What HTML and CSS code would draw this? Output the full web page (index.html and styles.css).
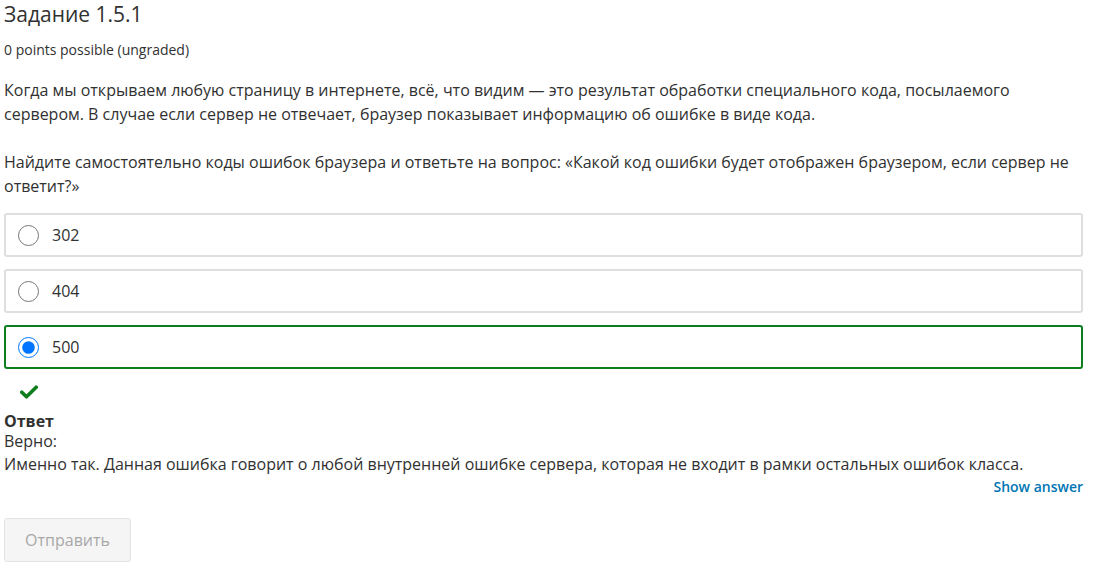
FILE: index.html
```html
<!DOCTYPE html>
<html lang="ru">
<head>
<meta charset="utf-8">
<link rel="stylesheet" href="styles.css">
</head>
<body>
<div class="problem">
  <h3 class="title">Задание 1.5.1</h3>
  <div class="points">0 points possible (ungraded)</div>
  <p class="text">Когда мы открываем любую страницу в интернете, всё, что видим — это результат обработки специального кода, посылаемого сервером. В случае если сервер не отвечает, браузер показывает информацию об ошибке в виде кода.</p>
  <p class="text">Найдите самостоятельно коды ошибок браузера и ответьте на вопрос: «Какой код ошибки будет отображен браузером, если сервер не ответит?»</p>
  <div class="choices">
    <label class="choice"><input type="radio" name="q"><span>302</span></label>
    <label class="choice"><input type="radio" name="q"><span>404</span></label>
    <label class="choice correct"><input type="radio" name="q" checked><span>500</span></label>
  </div>
  <div class="status">
    <svg width="18" height="14" viewBox="0 0 18 14"><path d="M1.8 7.2 L6.5 11.8 L16.2 2.2" fill="none" stroke="#0d7d1e" stroke-width="3.6" stroke-linecap="round" stroke-linejoin="round"/></svg>
  </div>
  <div class="feedback">
    <div class="fb-title">Ответ</div>
    <div>Верно:</div>
    <div>Именно так. Данная ошибка говорит о любой внутренней ошибке сервера, которая не входит в рамки остальных ошибок класса.</div>
  </div>
  <div class="show-row"><a class="show" href="#">Show answer</a></div>
  <button class="submit" disabled>Отправить</button>
</div>
</body>
</html>
```
FILE: styles.css
```css
html, body {
  margin: 0;
  padding: 0;
  background: #fff;
}
body {
  font-family: "Open Sans", "Noto Sans", sans-serif;
  color: #313131;
}
.problem {
  width: 1079px;
  padding-left: 4px;
}
.title {
  margin: 0;
  font-size: 21px;
  font-weight: 400;
  line-height: 28px;
  color: #313131;
}
.points {
  margin-top: 12px;
  font-size: 14px;
  line-height: 20px;
  color: #313131;
}
.text {
  margin: 18px 0 0;
  font-size: 16px;
  line-height: 24px;
}
.text + .text {
  margin-top: 24px;
}
.choices {
  margin-top: 15px;
  display: flex;
  flex-direction: column;
  gap: 12px;
}
.choice {
  display: flex;
  align-items: center;
  height: 44px;
  box-sizing: border-box;
  border: 2px solid #dedede;
  border-radius: 3px;
  padding-left: 12px;
  font-size: 16px;
}
.choice.correct {
  border-color: #0d7d1e;
}
.choice input {
  width: 21px;
  height: 21px;
  margin: 0 13px 0 0;
  accent-color: #0075ff;
}
.status {
  margin-top: 16px;
  padding-left: 16px;
  height: 16px;
  display: flex;
}
.feedback {
  margin-top: 11px;
  font-size: 16px;
  line-height: 23px;
}
.fb-title {
  font-weight: 700;
  line-height: 18px;
}
.show-row {
  display: flex;
  justify-content: flex-end;
}
.show {
  font-size: 14px;
  line-height: 22px;
  color: #0075b4;
  text-decoration: none;
  font-weight: 600;
}
.submit {
  margin-top: 20px;
  width: 127px;
  height: 44px;
  background: #f5f5f5;
  border: 1px solid #e2e2e2;
  border-radius: 3px;
  font-family: inherit;
  font-size: 16px;
  color: #a8a8a8;
}
```
